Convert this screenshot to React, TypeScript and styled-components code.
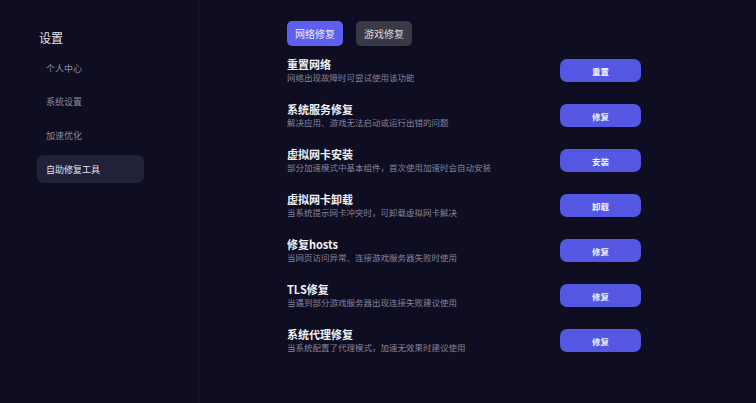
import styled, { createGlobalStyle } from 'styled-components';

const GlobalStyle = createGlobalStyle`
    html, body {
        margin: 0;
        padding: 0;
        background: #0e0d22;
    }
    body {
        font-family: "Noto Sans CJK SC", "Noto Sans", sans-serif;
    }
`

const Page = styled.div`
    display: flex;
    width: 756px;
    height: 403px;
    background: #0e0d22;
    overflow: hidden;
`
const Sidebar = styled.aside`
    width: 200px;
    flex-shrink: 0;
    border-right: 1px solid #15142a;
    padding: 29px 0 0 37px;
    box-sizing: border-box;
`
const SidebarTitle = styled.h2`
    margin: 0 0 7px 2px;
    font-size: 12px;
    line-height: 18px;
    font-weight: 400;
    color: #e6e6ee;
`
const Menu = styled.ul`
    list-style: none;
    margin: 0;
    padding: 0;
    display: flex;
    flex-direction: column;
    gap: 5.7px;
    width: 107px;
`
const MenuItem = styled.li<{ $active?: boolean }>`
    height: 28px;
    display: flex;
    align-items: center;
    padding-left: 9px;
    border-radius: 6px;
    font-size: 9px;
    color: ${p => (p.$active ? '#e4e4ec' : '#8d8c9c')};
    background: ${p => (p.$active ? '#22213a' : 'transparent')};
`
const Main = styled.main`
    padding: 21px 0 0 87px;
    width: 354px;
    display: flex;
    flex-direction: column;
`
const Tabs = styled.div`
    display: flex;
    gap: 13px;
    margin-bottom: 13px;
`
const Tab = styled.button<{ $active?: boolean }>`
    height: 25px;
    width: 56px;
    border: none;
    border-radius: 5px;
    font-family: inherit;
    font-size: 10px;
    padding: 0;
    color: ${p => (p.$active ? '#eef' : '#d8d8e0')};
    background: ${p => (p.$active ? '#5c5ff0' : '#3a3946')};
`
const List = styled.div`
    display: flex;
    flex-direction: column;
    gap: 22px;
`
const Row = styled.div`
    display: flex;
    align-items: center;
    justify-content: space-between;
    height: 23px;
`
const Info = styled.div`
    display: flex;
    flex-direction: column;
`
const Title = styled.div`
    font-size: 11px;
    line-height: 13px;
    font-weight: 700;
    color: #f2f2f6;
`
const Desc = styled.div`
    font-size: 8.5px;
    line-height: 12px;
    color: #84839a;
`
const ActionButton = styled.button`
    width: 81px;
    height: 23px;
    border: none;
    border-radius: 7px;
    background: #5457e2;
    color: #f0f0fa;
    font-family: inherit;
    font-size: 8.5px;
    font-weight: 700;
    padding: 0;
`

const items = [
    { title: '重置网络', desc: '网络出现故障时可尝试使用该功能', action: '重置' },
    { title: '系统服务修复', desc: '解决应用、游戏无法启动或运行出错的问题', action: '修复' },
    { title: '虚拟网卡安装', desc: '部分加速模式中基本组件，首次使用加速时会自动安装', action: '安装' },
    { title: '虚拟网卡卸载', desc: '当系统提示网卡冲突时，可卸载虚拟网卡解决', action: '卸载' },
    { title: '修复hosts', desc: '当网页访问异常、连接游戏服务器失败时使用', action: '修复' },
    { title: 'TLS修复', desc: '当遇到部分游戏服务器出现连接失败建议使用', action: '修复' },
    { title: '系统代理修复', desc: '当系统配置了代理模式，加速无效果时建议使用', action: '修复' },
];

const menu = ['个人中心', '系统设置', '加速优化', '自助修复工具'];

const App = () => {
    return <Page>
        <GlobalStyle />
        <Sidebar>
            <SidebarTitle>设置</SidebarTitle>
            <Menu>
                {menu.map(m => <MenuItem key={m} $active={m === '自助修复工具'}>{m}</MenuItem>)}
            </Menu>
        </Sidebar>
        <Main>
            <Tabs>
                <Tab $active>网络修复</Tab>
                <Tab>游戏修复</Tab>
            </Tabs>
            <List>
                {items.map(item => (
                    <Row key={item.title}>
                        <Info>
                            <Title>{item.title}</Title>
                            <Desc>{item.desc}</Desc>
                        </Info>
                        <ActionButton>{item.action}</ActionButton>
                    </Row>
                ))}
            </List>
        </Main>
    </Page>
}

export default App;
